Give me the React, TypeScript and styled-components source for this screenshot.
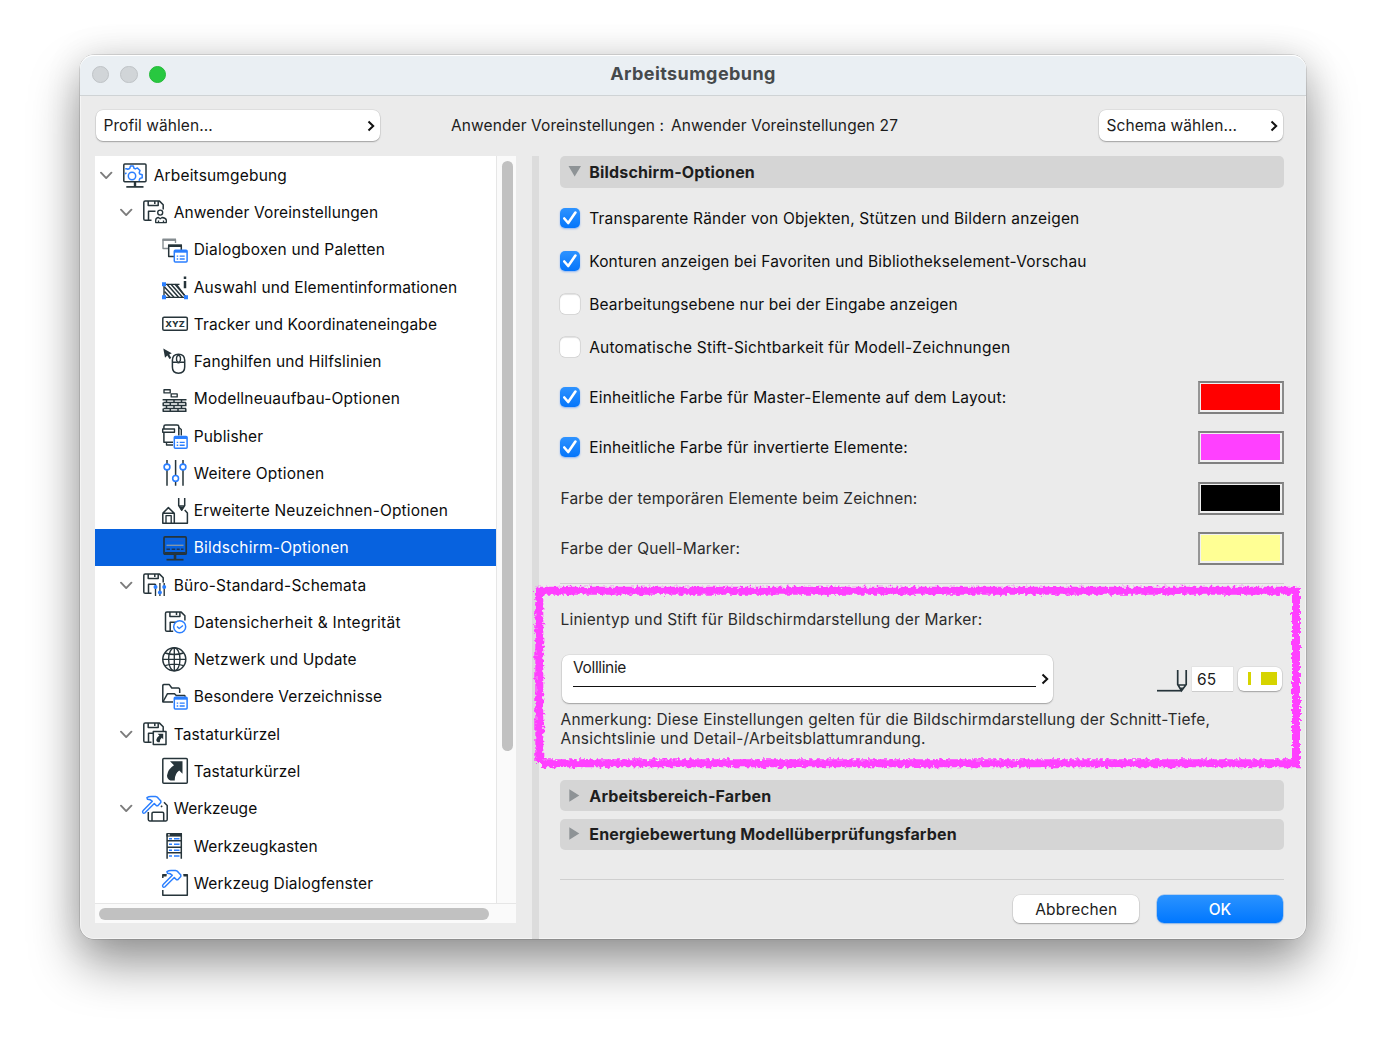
import React from "react";
import styled, { createGlobalStyle, css } from "styled-components";

const INK = "#26343a";
const BLUE = "#2b7fff";

const GlobalStyle = createGlobalStyle`
  *, *::before, *::after { box-sizing: border-box; }
  html, body { margin: 0; background: #fff; }
  body {
    font-family: Inter, "Liberation Sans", sans-serif;
    font-size: 15.5px;
    color: #1c1c1c;
    overflow: hidden;
  }
  button, input { font: inherit; color: inherit; }
`;

const Desktop = styled.main`
  width: 1386px;
  height: 1045px;
  padding: 55px 80px 0;
  overflow: hidden;
  background: #fff;
`;

const Window = styled.section`
  width: 1226px;
  height: 884px;
  display: flex;
  flex-direction: column;
  border-radius: 14px;
  background: #ebebeb;
  box-shadow: 0 0 0 0.5px rgba(0, 0, 0, 0.22), inset 0 0 0 1px rgba(255, 255, 255, 0.5),
    0 25px 50px rgba(0, 0, 0, 0.4), 0 1px 36px rgba(0, 0, 0, 0.12);
`;

const TitleBar = styled.header`
  height: 41px;
  flex: none;
  display: grid;
  grid-template-columns: 200px 1fr 200px;
  align-items: center;
  padding-bottom: 2px;
  border-radius: 14px 14px 0 0;
  border-bottom: 1px solid #cfd3d5;
  background: #eaeff3;
  box-shadow: inset 0 1px 0 #fff;
`;

const Lights = styled.div`
  display: flex;
  gap: 11px;
  padding: 1px 0 0 11.5px;
`;

const Light = styled.span<{ $on?: boolean }>`
  width: 17.5px;
  height: 17.5px;
  border-radius: 50%;
  background: ${(p) => (p.$on ? "#28c840" : "#d1d5d8")};
  border: 1px solid ${(p) => (p.$on ? "#24bb39" : "#bfc3c6")};
`;

const Title = styled.h1`
  margin: 0;
  text-align: center;
  font-size: 18px;
  font-weight: 700;
  line-height: 24px;
  letter-spacing: 0.42px;
  color: #464a4c;
`;

const TopBar = styled.div`
  height: 60px;
  flex: none;
  display: grid;
  grid-template-columns: 284px 1fr 184px;
  align-items: center;
  padding: 0 23px 2px 16px;
`;

const raised = css`
  border: 0;
  background: #fff;
  box-shadow: 0 0 0 0.5px rgba(0, 0, 0, 0.1), 0 1px 1.5px rgba(0, 0, 0, 0.28);
`;

const Picker = styled.button`
  ${raised}
  height: 31px;
  display: flex;
  align-items: center;
  justify-content: space-between;
  padding: 1px 3px 0 7.5px;
  border-radius: 7px;
  letter-spacing: 0.06px;
`;

const Current = styled.div`
  display: flex;
  justify-content: center;
  gap: 7px;
  padding-right: 130px;
  letter-spacing: 0.1px;
  white-space: pre;
`;

const Body = styled.div`
  flex: 1;
  min-height: 0;
  display: grid;
  grid-template-columns: 422px 30px 724px;
  padding-left: 15px;
`;

const TreePane = styled.nav`
  display: grid;
  grid-template-columns: 401px 20px;
  grid-template-rows: 747px 20px;
`;

const Tree = styled.ul`
  margin: 0;
  padding: 0.5px 0 0;
  list-style: none;
  overflow: hidden;
  background: #fff;
`;

const Row = styled.li<{ $level: number; $selected?: boolean }>`
  height: 37.27px;
  display: flex;
  align-items: center;
  padding-left: ${(p) => 5 + p.$level * 20}px;
  background: ${(p) => (p.$selected ? "#0762df" : "transparent")};
  color: ${(p) => (p.$selected ? "#fff" : "#0c0c0c")};
`;

const Twisty = styled.span`
  width: 22px;
  display: flex;
  svg { display: block; }
`;

const IconBox = styled.span`
  width: 26px;
  height: 26px;
  margin-right: 5.7px;
  flex: none;
  svg { display: block; overflow: visible; }
`;

const RowText = styled.span<{ $ls?: number }>`
  padding-top: 1.2px;
  white-space: nowrap;
  line-height: 22px;
  letter-spacing: ${(p) => p.$ls ?? 0}px;
`;

const VScroll = styled.div`
  padding: 5px 3px 0 5px;
  border-left: 1px solid #e6e6e6;
  background: #fafafa;
`;
const VThumb = styled.div`
  width: 11px;
  height: 590px;
  border-radius: 6px;
  background: #c1c1c1;
`;
const HScroll = styled.div`
  padding: 4px 0 0 4px;
  grid-column: 1 / 3;
  border-top: 1px solid #e6e6e6;
  background: #fafafa;
`;
const HThumb = styled.div`
  width: 390px;
  height: 12px;
  border-radius: 6px;
  background: #c1c1c1;
`;

const Gutter = styled.div`
  padding-left: 15px;
`;
const Splitter = styled.div`
  width: 7px;
  height: 783px;
  background: #dcdcdc;
`;

const Panel = styled.div`
  margin-left: 13px;
  width: 724px;
  display: flex;
  flex-direction: column;
`;

const SectionBar = styled.h2<{ $h: number }>`
  height: ${(p) => p.$h}px;
  flex: none;
  margin: 0;
  display: flex;
  align-items: center;
  padding-left: 8px;
  border-radius: 5px;
  background: #d5d5d5;
  font-size: 16px;
  font-weight: 700;
  letter-spacing: 0.16px;
  color: #1e1e1e;
  svg { width: 13px; margin-right: 8.3px; display: block; overflow: visible; }
`;

const Options = styled.div`
  padding-top: 9px;
`;

const OptionRow = styled.label<{ $h: number }>`
  height: ${(p) => p.$h}px;
  display: flex;
  align-items: center;
`;

const Check = styled.span<{ $on?: boolean }>`
  width: 20px;
  height: 20px;
  margin: 0 8.8px 1.5px 0.4px;
  flex: none;
  display: grid;
  place-items: center;
  border-radius: 5px;
  background: ${(p) => (p.$on ? "linear-gradient(#2e93ff, #0475fb)" : "#fff")};
  box-shadow: ${(p) =>
    p.$on
      ? "0 1px 2px rgba(0, 100, 255, 0.4)"
      : "0 0 0 0.5px rgba(0,0,0,.16), inset 0 1px 1px rgba(0,0,0,.12)"};
`;

const Label = styled.span<{ $ls?: number; $soft?: boolean }>`
  flex: 1;
  padding-left: ${(p) => (p.$soft ? 0.5 : 0)}px;
  white-space: nowrap;
  color: ${(p) => (p.$soft ? "#2b2b2b" : "#0e0e0e")};
  letter-spacing: ${(p) => p.$ls ?? 0}px;
`;

const Swatch = styled.span<{ $color: string }>`
  width: 86px;
  height: 33px;
  padding: 1px 3px 3px 1px;
  border: 2px solid #858585;
  border-color: #808080 #8a8a8a #808080 #969696;
  background: #f1f1f1;
  &::before {
    content: "";
    display: block;
    width: 79px;
    height: 26px;
    background: ${(p) => p.$color};
  }
`;

const Rule = styled.hr<{ $mt: number }>`
  width: 100%;
  height: 1px;
  flex: none;
  margin: ${(p) => p.$mt}px 0 0;
  border: 0;
  background: #cfcfcf;
`;

const Marker = styled.section`
  position: relative;
  height: 196px;
  flex: none;
  padding-top: 25px;
`;

const MarkerLabel = styled.div`
  height: 22px;
  padding-left: 0.5px;
  line-height: 22px;
  letter-spacing: 0.21px;
  color: #2b2b2b;
  white-space: nowrap;
`;

const LineRow = styled.div`
  display: flex;
  align-items: center;
  margin-top: 23.5px;
  height: 48px;
`;

const LinePicker = styled.button`
  ${raised}
  width: 491px;
  height: 48px;
  margin-left: 2px;
  display: flex;
  align-items: center;
  justify-content: space-between;
  padding: 0 2.5px 0 11px;
  border-radius: 7px;
`;

const LineSample = styled.span`
  width: 463px;
  height: 48px;
  display: flex;
  flex-direction: column;
  align-items: flex-start;
  padding-top: 3px;
  font-size: 15.5px;
  line-height: 20px;
  letter-spacing: -0.35px;
  &::after {
    content: "";
    width: 463px;
    height: 1.7px;
    margin-top: 8px;
    background: #111;
  }
`;

const PenGlyph = styled.span`
  margin: 4px 4px 0 104px;
  svg { display: block; }
`;

const PenNumber = styled.span`
  width: 41px;
  height: 24px;
  margin-top: 1px;
  padding-left: 5px;
  line-height: 25px;
  background: #fff;
  letter-spacing: 0.2px;
  box-shadow: 0 0 0 0.5px #dcdcdc, 0 1px 0 #bdbdbd;
`;

const PenColor = styled.span`
  ${raised}
  width: 44px;
  height: 24px;
  margin-left: 5px;
  display: flex;
  align-items: center;
  gap: 10px;
  padding-left: 10px;
  border-radius: 6px;
`;
const PenChip = styled.i<{ $w: number }>`
  width: ${(p) => p.$w}px;
  height: 13px;
  background: #d6d400;
`;

const Note = styled.p`
  margin: 7.7px 0 0;
  padding-left: 0.5px;
  line-height: 19px;
  white-space: nowrap;
  color: #2b2b2b;
`;
const NoteLine = styled.span<{ $ls: number }>`
  display: block;
  letter-spacing: ${(p) => p.$ls}px;
`;

const Highlight = styled.svg`
  position: absolute;
  left: -30px;
  top: -4px;
  pointer-events: none;
`;

const Bars = styled.div`
  display: flex;
  flex-direction: column;
  gap: 7.5px;
`;

const Footer = styled.footer`
  display: flex;
  justify-content: flex-end;
  gap: 17.5px;
  padding: 15px 1.2px 0 0;
`;

const Button = styled.button<{ $primary?: boolean }>`
  ${raised}
  width: 126px;
  height: 28.5px;
  padding: 0.5px 0 0;
  border-radius: 7px;
  letter-spacing: 0.2px;
  ${(p) =>
    p.$primary &&
    css`
      color: #fff;
      font-weight: 500;
      letter-spacing: -0.1px;
      background: linear-gradient(#2b93ff, #0077ff);
      box-shadow: 0 0 0 0.5px rgba(0, 110, 240, 0.4), 0 1px 2px rgba(0, 90, 200, 0.25);
    `}
`;

const Angle = () => (
  <svg width="12" height="14" viewBox="0 0 12 14" fill="none" stroke="#111" strokeWidth="2">
    <path d="M3.5 2.5 8.2 7l-4.700 4.500" />
  </svg>
);

const ChevronDown = () => (
  <svg width="13" height="9" viewBox="0 0 13 9" fill="none" stroke="#7c7c7c" strokeWidth="1.900">
    <path d="M1 1.700 6.200 7.100 11.400 1.700" strokeLinecap="round" strokeLinejoin="round" />
  </svg>
);

const Tick = () => (
  <svg width="14" height="14" viewBox="0 0 14 14" fill="none" stroke="#fff" strokeWidth="2.600">
    <path d="M1.300 7.500 5.200 12 12.400 1.600" strokeLinecap="round" strokeLinejoin="round" />
  </svg>
);

const TriDown = () => (
  <svg height="14" viewBox="0 0 13 14" fill="#8e9396">
    <path d="M.5 1h12.500L6.700 11.500z" />
  </svg>
);
const TriRight = () => (
  <svg height="14" viewBox="0 0 13 14" fill="#8e9396">
    <path d="M1.300 .2v12.500L11.300 6.400z" />
  </svg>
);

const Glyph = ({ children }: { children: React.ReactNode }) => (
  <svg width="26" height="26" viewBox="0 0 26 26" fill="none" stroke={INK} strokeWidth="1.350" strokeLinejoin="round">
    {children}
  </svg>
);

const FloppyTop = () => (
  <g strokeWidth="1.500">
    <path d="M9.500 21.300H3.200Q1.800 21.300 1.800 19.900V3.500Q1.800 2.100 3.200 2.100H17.500L21.200 5.800V10.500" />
    <path d="M6.200 2.100V6.600H16.200V2.100M12.800 2.100V5" />
    <path d="M6.500 21.300V12.200H13.500" />
  </g>
);

const ListPanel = ({ y }: { y: number }) => (
  <g transform={`translate(11.500 ${y})`} stroke={BLUE}>
    <rect x=".8" y=".8" width="12.800" height="11.600" rx="1" fill="#fff" strokeWidth="1.500" />
    <path d="M.8 2h12.800" strokeWidth="2.400" />
    <path d="M3.200 6.600h1.500M6.200 6.600h5M3.200 9.500h1.500M6.200 9.500h5" strokeWidth="1.400" />
  </g>
);

const Hammer = () => (
  <path
    stroke={BLUE}
    fill="#fff"
    strokeWidth="1.500"
    d="M5 1.700Q6.500.6 9 .6H13.500Q15.500 1 16.500 2.500L18.800 5V6.500L15.800 9.700H14.500L12.300 7.500L3 16.800Q1.500 17.600.8 16.600Q.2 15.500 1.200 14.500L10.300 5.200Q8.500 3.300 5.500 3.200Z"
  />
);

const ShortcutArrow = () => (
  <path
    stroke="none"
    fill={INK}
    d="M8 3.300H20.500V15.700L17.200 12.500Q12.500 16 12.800 22.500L8.500 22.600Q5 21 5 17.500Q6 11 12 7.300Z"
  />
);

const icons: Record<string, React.ReactNode> = {
  env: (
    <>
      <rect x="1.800" y="2" width="22.200" height="17.700" rx="1" strokeWidth="1.500" />
      <g stroke={BLUE} strokeWidth="1.500">
        <circle cx="10" cy="14" r="3.700" />
        <path d="M3.200 6.800H4.500L5.800 7.300 7.700 6.500 8.500 4H11.300L12 6.300 13.300 6.900 15.400 5.900 18 8.600 17.200 10.700 17.700 12 20.200 12.800V15.700L17.900 16.400 17 18.700M3 11.700 4.500 11" />
      </g>
      <path d="M13 19.700v5" strokeWidth="2.400" />
      <path d="M4.300 24.900h17.200" strokeWidth="1.700" />
    </>
  ),
  user: (
    <>
      <FloppyTop />
      <circle cx="18.200" cy="13.600" r="2.500" fill="#fff" />
      <path d="M13.700 23.600V21Q14 18.700 16.500 18.500L18.200 19.700 20 18.500Q23.800 18.800 24.300 21V23.600ZM16.500 21.500v2M21.500 21.500v2" fill="#fff" />
    </>
  ),
  dialogs: (
    <>
      <g stroke="#858c90">
        <path d="M6 11.500H1V2.700H13.500V6" />
        <path d="M.5 2.700H14" strokeWidth="2.400" />
      </g>
      <path d="M12 19.500H6.700V8.500H19.300V13" fill="none" strokeWidth="1.500" />
      <path d="M6 8.700H20" strokeWidth="2.600" />
      <ListPanel y={12.500} />
    </>
  ),
  select: (
    <>
      <path d="M2 10.300H17.500M2 10.300V23.300H24L14.500 10.300" />
      <path d="M2.500 13 12 23.300M5 10.300 16.500 23.300M9 10.300 20.500 23.300M13 10.300 23.500 22.500M2.500 17.500 8 23.300" strokeWidth="1.500" />
      <g fill={BLUE} stroke="none">
        <path d="M0 8.300h4v4H0zM0 21.300h4v4H0zM22 21.300h4v4H22z" />
      </g>
      <path d="M23 2.600v2.400M23 7v7.200" strokeWidth="2.500" />
    </>
  ),
  xyz: (
    <>
      <rect x=".8" y="6.200" width="24.500" height="13" rx="1.300" strokeWidth="1.500" />
      <text
        x="13"
        y="15.600"
        fill={INK}
        stroke="none"
        textAnchor="middle"
        fontSize="8"
        fontWeight="800"
        textLength="19.500"
        lengthAdjust="spacingAndGlyphs"
      >
        XYZ
      </text>
    </>
  ),
  mouse: (
    <>
      <path d="M1.300.5 9.800 5.300 7.200 6.500 9.300 9.900 7.500 11 5.300 7.500 3 9.700z" fill={INK} stroke="none" />
      <path d="M10.400 12.300Q10.400 6.300 16.500 6.300T22.700 12.300V19Q22.700 25.200 16.500 25.200T10.400 19Z" fill="#fff" strokeWidth="1.500" />
      <path d="M10.400 14.200H14.500M18.500 14.200h4.200M14.500 14.200Q16.500 15.500 18.500 14.200" />
      <ellipse cx="16.500" cy="10.800" rx="2" ry="3.400" />
    </>
  ),
  bricks: (
    <>
      <path d="M2 3.700h6.200v3.200H2zM9.200 7.900h6v3h-6z" />
      <path d="M.6 13.700H24.500M1.500 16.600H24M.6 19.500H24.500M1.500 22.400H24M.6 25.200H24.500M4.500 13.700v3M12 13.700v3M19.500 13.700v3M1.200 16.600v2.900M8.300 16.600v2.900M16 16.600v2.900M23.800 16.600v2.900M4.500 19.500v2.900M12 19.500v2.900M19.500 19.500v2.900M1.200 22.400v2.800M8.300 22.400v2.800M16 22.400v2.800M23.800 22.400v2.800" strokeWidth="1.500" />
    </>
  ),
  publisher: (
    <>
      <path d="M1.900 6V3.500Q1.900 1.900 3.500 1.900H15Q16.800 1.900 16.800 3.500V12.500M1.900 9.500V19.300H11" strokeWidth="1.500" />
      <path d="M16.800 4.500 19.300 6.500V12.500M4.500 19.500V22H11" />
      <rect x=".7" y="6" width="11.800" height="3.200" fill="#fff" />
      <ListPanel y={12.800} />
    </>
  ),
  sliders: (
    <>
      <path d="M5 0v25.700M13.600 0v25.700M21 0v25.700" strokeWidth="1.500" />
      <g fill="#fff" stroke={BLUE} strokeWidth="1.600">
        <circle cx="5" cy="7" r="2.900" />
        <circle cx="13.600" cy="18.400" r="2.900" />
        <circle cx="21" cy="7" r="2.900" />
      </g>
    </>
  ),
  redraw: (
    <>
      <path d="M.7 15.300 6.400 9.600 12.300 15.300M.8 15.300V25.200H25.400V15L22.700 12M.8 15.300H12.300V25.200" strokeWidth="1.500" />
      <path d="M4 25.200V17.600H9.200V25.200" />
      <path d="M16.700 0V7.700L19.700 12.200 22.700 7.700V0M17 8h5.500" strokeWidth="1.500" />
      <path d="M18.500 9.500h2.400l-1.200 2.500z" fill={INK} />
    </>
  ),
  screen: (
    <>
      <rect x="2" y="1.900" width="22.200" height="17.300" rx="1" strokeWidth="1.700" />
      <path d="M4.500 5.700H21.500" stroke="#1a5fd0" />
      <path d="M4.500 10.300H21.500" stroke="#8496a8" />
      <path d="M4.500 14.300H8M9.700 14.300h3.500M14.700 14.300h3M19 14.300h2.500" stroke="#1b3558" strokeWidth="1.500" />
      <path d="M3 17.900H23.500" strokeWidth="1.800" />
      <path d="M13 19.500v5" strokeWidth="2.600" />
      <path d="M4.500 24.700H21.500" strokeWidth="1.700" />
    </>
  ),
  office: (
    <>
      <FloppyTop />
      <path d="M13.500 13V23.700M17.900 11.500V23.700M22.200 11.500V23.700" stroke="#fff" strokeWidth="4" />
      <path d="M13.500 12V24M17.900 11V24M22.200 11V24" />
      <g fill={BLUE} stroke="none">
        <circle cx="13.500" cy="15" r="2" />
        <circle cx="17.900" cy="20.500" r="2" />
        <circle cx="22.200" cy="15" r="2" />
      </g>
    </>
  ),
  security: (
    <>
      <g transform="translate(1.700 1)">
        <FloppyTop />
      </g>
      <circle cx="17.700" cy="17.800" r="6" fill="#fff" stroke={BLUE} strokeWidth="1.500" />
      <path d="M15 17.500l2.200 2 3.800-3" stroke={BLUE} strokeWidth="1.400" />
    </>
  ),
  globe: (
    <>
      <circle cx="12.300" cy="12.300" r="11.500" strokeWidth="1.500" />
      <ellipse cx="12.300" cy="12.300" rx="5.700" ry="11.500" />
      <path d="M12.300.8V23.800M.8 12.300H23.800M3 6Q12.300 9 21.600 6M3 18.600Q12.300 15.600 21.600 18.600" />
    </>
  ),
  folder: (
    <>
      <path d="M.8 18V1.500Q1 .6 2 .6H7.300L9.800 4H16.500Q17.700 4.200 17.700 5.500V9" strokeWidth="1.500" />
      <path d="M11 18H.9L5.500 9.700H12.500L14.300 11.500H22.500Q23.200 11.800 23 12.800" strokeWidth="1.500" />
      <ListPanel y={12.500} />
    </>
  ),
  keys: (
    <>
      <FloppyTop />
      <rect x="11.300" y="10.500" width="12.700" height="13" fill="#fff" strokeWidth="1.500" />
      <g transform="translate(12 11.200) scale(.45)">
        <ShortcutArrow />
      </g>
    </>
  ),
  shortcut: (
    <>
      <rect x=".8" y=".5" width="24.500" height="24.700" rx="1" strokeWidth="1.500" />
      <ShortcutArrow />
    </>
  ),
  tools: (
    <>
      <path d="M6.300 16V23.500Q6.300 24.900 7.700 24.900H24Q25.200 24.900 25.200 23.500V9.500L22 6.300M10 24.900V17.500Q10 16.300 11.200 16.300H20.500Q21.700 16.300 21.700 17.500V24.900M19 11l1.200-1.200" strokeWidth="1.500" />
      <Hammer />
    </>
  ),
  toolbox: (
    <>
      <path d="M5.100 1V25.700M19.300 1V25.700M5 7.800H19.500M5 14.200H19.500M5 19.800H19.500" strokeWidth="1.500" />
      <path d="M4.400 0H20V3.600H4.400z" fill={INK} stroke="none" />
      <path d="M6 1.900h1.800" stroke="#fff" />
      <path d="M7 5.800h3M12 5.800h5.500M7 11.300h3M12 11.300h5.500M7 17.300h3M12 17.300h5.500M7 23h3M12 23h5.500" stroke={BLUE} strokeWidth="1.500" />
    </>
  ),
  toolDialog: (
    <>
      <path d="M.8 8V4.800H4.500M21.500 4.800H25.300V25.300H.8V20" strokeWidth="1.500" />
      <path d="M1 5.200H4.500M21.500 5.200H25" strokeWidth="2.500" />
      <Hammer />
    </>
  ),
};

type Node = { level: number; icon: string; text: string; ls?: number };

const nodes: Node[] = [
  { level: 0, icon: "env", text: "Arbeitsumgebung", ls: 0.17 },
  { level: 1, icon: "user", text: "Anwender Voreinstellungen", ls: 0.12 },
  { level: 2, icon: "dialogs", text: "Dialogboxen und Paletten", ls: 0.2 },
  { level: 2, icon: "select", text: "Auswahl und Elementinformationen", ls: 0.14 },
  { level: 2, icon: "xyz", text: "Tracker und Koordinateneingabe", ls: 0.15 },
  { level: 2, icon: "mouse", text: "Fanghilfen und Hilfslinien", ls: 0.15 },
  { level: 2, icon: "bricks", text: "Modellneuaufbau-Optionen", ls: 0.22 },
  { level: 2, icon: "publisher", text: "Publisher", ls: 0.14 },
  { level: 2, icon: "sliders", text: "Weitere Optionen", ls: 0.23 },
  { level: 2, icon: "redraw", text: "Erweiterte Neuzeichnen-Optionen", ls: 0.17 },
  { level: 2, icon: "screen", text: "Bildschirm-Optionen", ls: 0.24 },
  { level: 1, icon: "office", text: "Büro-Standard-Schemata", ls: 0.22 },
  { level: 2, icon: "security", text: "Datensicherheit & Integrität", ls: 0.28 },
  { level: 2, icon: "globe", text: "Netzwerk und Update", ls: 0.16 },
  { level: 2, icon: "folder", text: "Besondere Verzeichnisse", ls: 0.13 },
  { level: 1, icon: "keys", text: "Tastaturkürzel", ls: 0.14 },
  { level: 2, icon: "shortcut", text: "Tastaturkürzel", ls: 0.15 },
  { level: 1, icon: "tools", text: "Werkzeuge", ls: 0.04 },
  { level: 2, icon: "toolbox", text: "Werkzeugkasten", ls: 0.1 },
  { level: 2, icon: "toolDialog", text: "Werkzeug Dialogfenster", ls: 0.15 },
];

type Option = { text: string; h: number; check?: boolean; color?: string; ls: number };

const options: Option[] = [
  { text: "Transparente Ränder von Objekten, Stützen und Bildern anzeigen", h: 43, check: true, ls: 0.19 },
  { text: "Konturen anzeigen bei Favoriten und Bibliothekselement-Vorschau", h: 43, check: true, ls: 0.17 },
  { text: "Bearbeitungsebene nur bei der Eingabe anzeigen", h: 43, check: false, ls: 0.155 },
  { text: "Automatische Stift-Sichtbarkeit für Modell-Zeichnungen", h: 43, check: false, ls: 0.215 },
  { text: "Einheitliche Farbe für Master-Elemente auf dem Layout:", h: 57, check: true, color: "#ff0000", ls: 0.185 },
  { text: "Einheitliche Farbe für invertierte Elemente:", h: 43.5, check: true, color: "#ff40ff", ls: 0.185 },
  { text: "Farbe der temporären Elemente beim Zeichnen:", h: 57, color: "#000", ls: 0.18 },
  { text: "Farbe der Quell-Marker:", h: 43.5, color: "#ffff94", ls: 0.15 },
];

const PenIcon = () => (
  <svg width="31" height="24" viewBox="0 0 31 24" fill="none" stroke={INK} strokeWidth="1.700">
    <path d="M0 21.700H24" />
    <path d="M20.700 1V15.500L24.500 21.700 29.200 15.500V1M21 16H29" />
    <path d="M23.200 18.500h3l-1.500 3z" fill={INK} stroke="none" />
  </svg>
);

const CrayonFrame = () => (
  <Highlight width="780" height="194" viewBox="0 0 780 194" fill="none" stroke="#ff40ff">
    <defs>
      <filter id="crayon" x="0" y="0" width="780" height="194" filterUnits="userSpaceOnUse">
        <feTurbulence type="fractalNoise" baseFrequency="0.3" numOctaves="2" seed="4" />
        <feDisplacementMap in="SourceGraphic" scale="6.5" xChannelSelector="R" yChannelSelector="G" />
      </filter>
    </defs>
    <g filter="url(#crayon)" strokeWidth="8">
      <path d="M5 10.800H770" />
      <path d="M766 8V187" />
      <path d="M12 183.200H770" />
      <path d="M9.300 8V182" />
    </g>
  </Highlight>
);

export default function App() {
  return (
    <Desktop>
      <GlobalStyle />
      <Window>
        <TitleBar>
          <Lights>
            <Light />
            <Light />
            <Light $on />
          </Lights>
          <Title>Arbeitsumgebung</Title>
        </TitleBar>
        <TopBar>
          <Picker>
            Profil wählen...
            <Angle />
          </Picker>
          <Current>
            <span>Anwender Voreinstellungen :</span>
            <span>Anwender Voreinstellungen 27</span>
          </Current>
          <Picker>
            Schema wählen...
            <Angle />
          </Picker>
        </TopBar>
        <Body>
          <TreePane>
            <Tree>
              {nodes.map((n) => (
                <Row key={n.icon} $level={n.level} $selected={n.icon === "screen"}>
                  <Twisty>{n.level < 2 && <ChevronDown />}</Twisty>
                  <IconBox>
                    <Glyph>{icons[n.icon]}</Glyph>
                  </IconBox>
                  <RowText $ls={n.ls}>{n.text}</RowText>
                </Row>
              ))}
            </Tree>
            <VScroll>
              <VThumb />
            </VScroll>
            <HScroll>
              <HThumb />
            </HScroll>
          </TreePane>
          <Gutter>
            <Splitter />
          </Gutter>
          <Panel>
            <SectionBar $h={32}>
              <TriDown />
              Bildschirm-Optionen
            </SectionBar>
            <Options>
              {options.map((o) => (
                <OptionRow key={o.text} $h={o.h}>
                  {o.check !== undefined && <Check $on={o.check}>{o.check && <Tick />}</Check>}
                  <Label $ls={o.ls} $soft={o.check === undefined}>
                    {o.text}
                  </Label>
                  {o.color && <Swatch $color={o.color} />}
                </OptionRow>
              ))}
            </Options>
            <Rule $mt={13} />
            <Marker>
              <MarkerLabel>Linientyp und Stift für Bildschirmdarstellung der Marker:</MarkerLabel>
              <LineRow>
                <LinePicker>
                  <LineSample>Volllinie</LineSample>
                  <Angle />
                </LinePicker>
                <PenGlyph>
                  <PenIcon />
                </PenGlyph>
                <PenNumber>65</PenNumber>
                <PenColor>
                  <PenChip $w={3} />
                  <PenChip $w={16} />
                </PenColor>
              </LineRow>
              <Note>
                <NoteLine $ls={0.2}>Anmerkung: Diese Einstellungen gelten für die Bildschirmdarstellung der Schnitt-Tiefe,</NoteLine>
                <NoteLine $ls={0.215}>Ansichtslinie und Detail-/Arbeitsblattumrandung.</NoteLine>
              </Note>
              <CrayonFrame />
            </Marker>
            <Bars>
              <SectionBar $h={31}>
                <TriRight />
                Arbeitsbereich-Farben
              </SectionBar>
              <SectionBar $h={31.5}>
                <TriRight />
                Energiebewertung Modellüberprüfungsfarben
              </SectionBar>
            </Bars>
            <Rule $mt={28.5} />
            <Footer>
              <Button>Abbrechen</Button>
              <Button $primary>OK</Button>
            </Footer>
          </Panel>
        </Body>
      </Window>
    </Desktop>
  );
}
